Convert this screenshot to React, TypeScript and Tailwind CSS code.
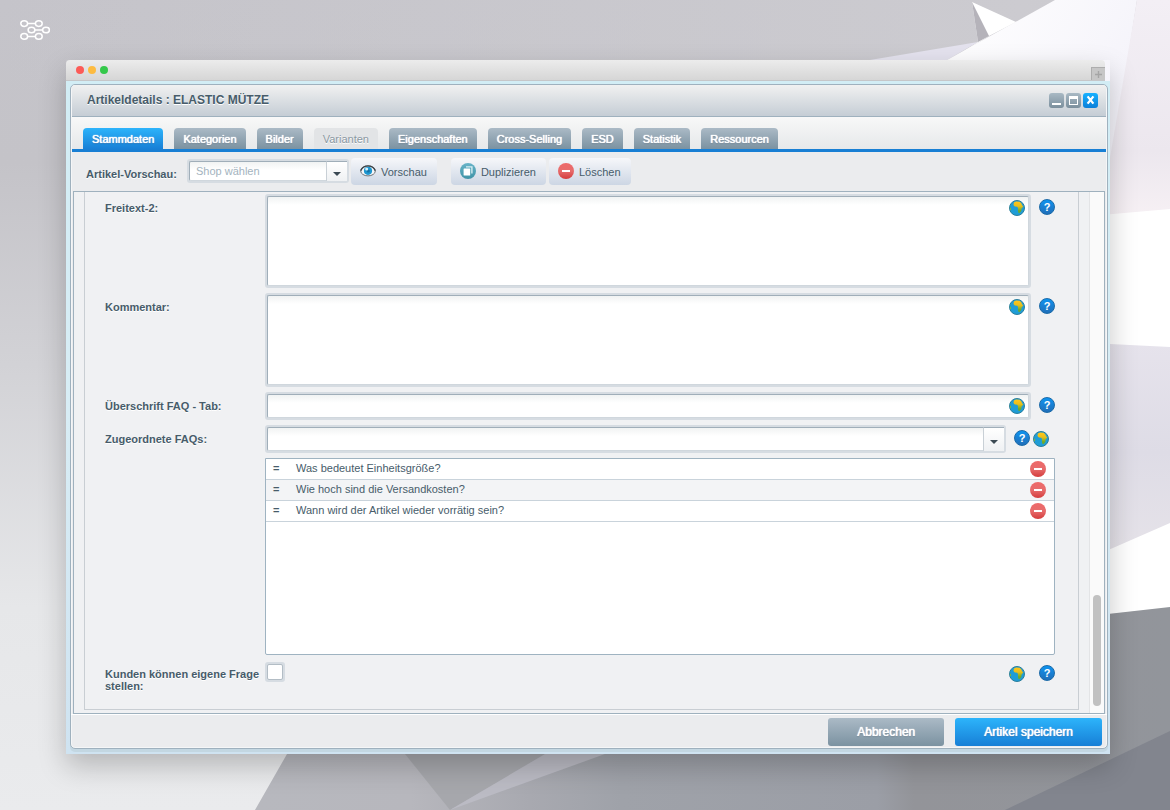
import { useId, useState, type ReactNode } from "react";

const TEXT = "text-[11px] leading-[12px] text-[#475c6a]";

function Backdrop() {
  return (
    <svg
      aria-hidden="true"
      viewBox="0 0 1170 810"
      preserveAspectRatio="none"
      className="absolute inset-0 h-full w-full"
    >
      <defs>
        <linearGradient id="bgBase" x1="0" y1="0" x2="0" y2="1">
          <stop offset="0" stopColor="#c5c4ca" />
          <stop offset="0.2" stopColor="#c4c3c8" />
          <stop offset="0.45" stopColor="#d2d2d6" />
          <stop offset="0.75" stopColor="#e6e7e9" />
          <stop offset="1" stopColor="#eaebed" />
        </linearGradient>
        <linearGradient id="bgTop" x1="0" y1="0" x2="1" y2="0">
          <stop offset="0" stopColor="#cdccd1" stopOpacity="0" />
          <stop offset="1" stopColor="#cdccd1" />
        </linearGradient>
        <linearGradient id="bgSheet" x1="0" y1="0" x2="1" y2="1">
          <stop offset="0" stopColor="#ffffff" />
          <stop offset="1" stopColor="#eeecf7" />
        </linearGradient>
        <linearGradient id="bgPink" x1="0" y1="0" x2="0" y2="1">
          <stop offset="0" stopColor="#f3eff5" />
          <stop offset="0.7" stopColor="#ece7ee" />
          <stop offset="1" stopColor="#f6f0f4" />
        </linearGradient>
        <linearGradient id="bgLavender" x1="0" y1="0" x2="0" y2="1">
          <stop offset="0" stopColor="#e6e3ec" />
          <stop offset="0.5" stopColor="#dedce6" />
          <stop offset="1" stopColor="#e6e3e9" />
        </linearGradient>
        <linearGradient id="bgFloor" x1="255" y1="0" x2="1170" y2="0" gradientUnits="userSpaceOnUse">
          <stop offset="0" stopColor="#b7b8be" />
          <stop offset="0.17" stopColor="#b7b7bd" />
          <stop offset="0.3" stopColor="#a8a9b0" />
          <stop offset="0.4" stopColor="#9fa2a9" />
          <stop offset="0.68" stopColor="#9b9ea6" />
          <stop offset="0.72" stopColor="#939499" />
          <stop offset="1" stopColor="#92959b" />
        </linearGradient>
      </defs>
      <rect width="1170" height="810" fill="url(#bgBase)" />
      <rect width="1170" height="90" fill="url(#bgTop)" />
      <path d="M870 60 978 42 947 60Z" fill="#e4e2ee" />
      <path d="M947 60 1055 0H1137L1090 300H947Z" fill="url(#bgSheet)" />
      <path d="M972 2 1016 22 989 36 947 62 978 42Z" fill="#ffffff" />
      <path d="M972 2 989 36 978 42Z" fill="#b5b3ba" />
      <path d="M1137 0H1170V212L1100 216Z" fill="url(#bgPink)" />
      <path d="M1090 216 1170 209V350H1090Z" fill="#ffffff" />
      <path d="M1090 343 1170 347V525L1090 560Z" fill="url(#bgLavender)" />
      <path d="M1090 558 1170 523V608L1090 616Z" fill="#ffffff" />
      <path d="M1090 616 1170 607V810H255L287 754 400 700H1090Z" fill="url(#bgFloor)" />
      <path d="M405 754H545L450 810Z" fill="#a6a7ac" />
      <path d="M450 810 545 754H605Z" fill="#bbbbc4" />
      <path d="M1005 810 1170 731V810Z" fill="#82858e" />
    </svg>
  );
}

function Logo() {
  const nodes = [
    [4.2, 3.6],
    [18.8, 3.6],
    [11.5, 10],
    [26, 10],
    [4.2, 16.4],
    [18.8, 16.4],
  ];
  return (
    <svg width="30" height="20" viewBox="0 0 30 20" fill="none" stroke="#fff" strokeWidth="1.5" role="img" aria-label="Logo">
      {nodes.map(([cx, cy]) => (
        <ellipse key={`${cx}-${cy}`} cx={cx} cy={cy} rx="3.4" ry="2.8" />
      ))}
      <path d="M7.6 3.6h7.8M14.9 10h7.7M7.6 16.4h7.8" />
    </svg>
  );
}

function GlobeIcon() {
  const id = useId();
  return (
    <svg width="16" height="16" viewBox="0 0 16 16" className="block" aria-hidden="true">
      <defs>
        <linearGradient id={id} x1="0" y1="0" x2="0" y2="1">
          <stop offset="0.1" stopColor="#fcc419" />
          <stop offset="0.4" stopColor="#e9bf1c" />
          <stop offset="0.8" stopColor="#6cab2a" />
        </linearGradient>
      </defs>
      <circle cx="8" cy="8" r="7.5" fill="#1f9dd6" stroke="#2a7f9d" strokeWidth="1" />
      <path
        d="M4.900 2.500 7 1.400l3.700.3 1.700 1.900.9 2.100h1.100l-.9 1.900-1 1.200-.2 2.100-1.900 2.300-1-.5-.5-2.300.2-2.200-.9-1.400-2.400-.3-1.300-1.400Z"
        fill={`url(#${id})`}
      />
      <path d="M.8 7.200 2 8.500 1.900 9.800 1.100 10.500Z" fill="#8fb82a" />
    </svg>
  );
}

function GlobeButton() {
  return (
    <button type="button" aria-label="Übersetzen" className="block size-4 shrink-0">
      <GlobeIcon />
    </button>
  );
}

function HelpButton() {
  return (
    <button
      type="button"
      aria-label="Hilfe"
      className="block size-4 shrink-0 rounded-full border border-[#1a6aa8] bg-linear-to-b from-[#0a93f0] to-[#1f6fb9] text-center text-[11px] leading-[14px] font-bold text-white"
    >
      ?
    </button>
  );
}

function RemoveIcon() {
  const id = useId();
  return (
    <svg width="16" height="16" viewBox="0 0 16 16" className="block" aria-hidden="true">
      <defs>
        <linearGradient id={id} x1="0" y1="0" x2="0" y2="1">
          <stop offset="0" stopColor="#ee6a6a" />
          <stop offset="0.5" stopColor="#e76c6c" />
          <stop offset="1" stopColor="#d43c3c" />
        </linearGradient>
      </defs>
      <circle cx="8" cy="8" r="8" fill={`url(#${id})`} />
      <rect x="4" y="7" width="8" height="2" fill="#fff" />
    </svg>
  );
}

function CopyIcon() {
  return (
    <svg width="16" height="16" viewBox="0 0 16 16" className="block" aria-hidden="true">
      <defs>
        <linearGradient id="copyFill" x1="0" y1="0" x2="0" y2="1">
          <stop offset="0" stopColor="#67b3c8" />
          <stop offset="1" stopColor="#3f93a6" />
        </linearGradient>
      </defs>
      <circle cx="8" cy="8" r="8" fill="url(#copyFill)" />
      <path d="M6 3.200h6.600v7.400h-1.400V4.600H6Z" fill="#d9eef3" />
      <rect x="3.600" y="5.400" width="6.600" height="7.200" rx="0.500" fill="#fff" />
    </svg>
  );
}

function EyeIcon() {
  return (
    <svg width="16" height="16" viewBox="0 0 16 16" className="block" aria-hidden="true">
      <ellipse cx="8" cy="8" rx="7.300" ry="4.900" fill="#f6f7f9" stroke="#6c7378" strokeWidth="1" />
      <path d="M.7 7.600C2.400 4 5 2.900 8 2.900s5.600 1.100 7.300 4.700" fill="none" stroke="#3b4247" strokeWidth="1.300" />
      <circle cx="8" cy="7.800" r="4.100" fill="#1e96cf" />
      <circle cx="8.300" cy="8" r="1.600" fill="#1573a8" />
      <circle cx="6.700" cy="6" r="1.500" fill="#d8f0fb" />
    </svg>
  );
}

function Arrow() {
  return (
    <span className="pointer-events-none absolute inset-y-0 right-0 flex w-[21px] items-center justify-center border-t border-l border-t-[#a0aeb9] border-l-[#c9d0d6] bg-linear-to-b from-white to-[#eff1f3]">
      <svg width="8" height="4" viewBox="0 0 8 4" className="mt-1" aria-hidden="true">
        <path d="M0 0h8L4 4Z" fill="#3c4a54" />
      </svg>
    </span>
  );
}

const RING = "rounded-[3px] bg-[#d6dce2] p-[2px]";
const INNER =
  "block w-full rounded-[2px] border border-t-[#a0aeb9] border-r-[#d0d7dd] border-b-[#d0d7dd] border-l-[#a0aeb9] bg-white bg-linear-to-b from-[#f1f3f3] via-white via-[8px] to-white outline-none";

function Row({ id, label, children }: { id: string; label: string; children: ReactNode }) {
  return (
    <div className="flex items-start">
      <label htmlFor={id} className={`${TEXT} w-40 shrink-0 pt-2 font-bold [text-shadow:0_1px_0_#fff]`}>
        {label}
      </label>
      {children}
    </div>
  );
}

function AreaRow({ id, label }: { id: string; label: string }) {
  return (
    <Row id={id} label={label}>
      <div className={`${RING} relative flex-1`}>
        <textarea id={id} className={`${INNER} h-[90px] resize-none py-1 pr-7 pl-1 ${TEXT}`} />
        <div className="absolute top-[6px] right-[6px]">
          <GlobeButton />
        </div>
      </div>
      <div className="pt-[5px] pl-2">
        <HelpButton />
      </div>
    </Row>
  );
}

const TABS = [
  "Stammdaten",
  "Kategorien",
  "Bilder",
  "Varianten",
  "Eigenschaften",
  "Cross-Selling",
  "ESD",
  "Statistik",
  "Ressourcen",
];

function Tabs() {
  const [active, setActive] = useState("Stammdaten");
  return (
    <div
      role="tablist"
      className="mx-px flex h-[35px] items-end gap-[11px] border-b-[3px] border-[#187fd4] bg-linear-to-b from-[#f8f8f8] to-[#e6e8ea] pl-[11px]"
    >
      {TABS.map((tab) => {
        const disabled = tab === "Varianten";
        const look = disabled
          ? "bg-[#e2e4e6] text-[#8a98a2] [text-shadow:0_1px_0_#fff]"
          : tab === active
            ? "bg-linear-to-b from-[#2db4fb] to-[#187fd6] text-white [text-shadow:0_0_1px_#fff,0_0_1px_#fff,0_1px_1px_#1460a8]"
            : "bg-linear-to-b from-[#abbac6] to-[#7b92a1] text-white [text-shadow:0_0_1px_#fff,0_0_1px_#fff,0_1px_1px_#5c7282]";
        return (
          <button
            key={tab}
            type="button"
            role="tab"
            aria-selected={tab === active}
            disabled={disabled}
            onClick={() => setActive(tab)}
            className={`h-[21px] rounded-t-[4px] px-[9px] text-[11px] leading-[12px] whitespace-nowrap ${look}`}
          >
            {tab}
          </button>
        );
      })}
    </div>
  );
}

function ToolButton({ icon, children }: { icon: ReactNode; children: ReactNode }) {
  return (
    <button
      type="button"
      className={`${TEXT} flex h-[27px] items-center gap-[5px] rounded-[4px] bg-linear-to-b from-[#f6f7fa] to-[#cdd6e4] pr-[10px] pl-[9px]`}
    >
      <span className="-mt-[2px]">{icon}</span>
      {children}
    </button>
  );
}

function Toolbar() {
  return (
    <div className="flex h-[39px] items-start pt-[6px] pl-[15px]">
      <label htmlFor="shop" className={`${TEXT} w-[101px] shrink-0 pt-[10px] font-bold [text-shadow:0_1px_0_#fff]`}>
        Artikel-Vorschau:
      </label>
      <div className={`${RING} mt-px w-[162px]`}>
        <div className="relative">
          <select
            id="shop"
            defaultValue=""
            className={`${INNER} h-5 appearance-none pr-6 pl-[6px] text-[11px] leading-[12px] text-[#a3b3be]`}
          >
            <option value="">Shop wählen</option>
          </select>
          <Arrow />
        </div>
      </div>
      <div className="flex pl-[2px]">
        <ToolButton icon={<EyeIcon />}>Vorschau</ToolButton>
      </div>
      <div className="flex gap-[3px] pl-[14px]">
        <ToolButton icon={<CopyIcon />}>Duplizieren</ToolButton>
        <ToolButton icon={<RemoveIcon />}>Löschen</ToolButton>
      </div>
    </div>
  );
}

function TitleBar() {
  const box = "flex size-[15px] items-center justify-center rounded-[3px]";
  return (
    <div className="mx-px flex h-8 items-start justify-between rounded-t-[3px] border-b border-[#9fb1be] bg-linear-to-b from-[#f1f1f1] to-[#c5cdd5] pr-2 pl-[15px]">
      <h1 className="pt-2 text-[12px] leading-[14px] font-bold text-[#475c6a] [text-shadow:0_1px_0_#fff]">
        Artikeldetails : ELASTIC MÜTZE
      </h1>
      <div className="flex gap-[2px] pt-2">
        <button type="button" aria-label="Minimieren" className={`${box} bg-linear-to-b from-[#a9b9c4] to-[#7b8f9d]`}>
          <svg width="15" height="15" viewBox="0 0 15 15">
            <path d="M3 10h9v2H3Z" fill="#fff" />
          </svg>
        </button>
        <button type="button" aria-label="Maximieren" className={`${box} bg-linear-to-b from-[#a9b9c4] to-[#7b8f9d]`}>
          <svg width="15" height="15" viewBox="0 0 15 15">
            <path d="M3 3h9v9H3ZM4 6v5h7V6Z" fill="#fff" fillRule="evenodd" />
          </svg>
        </button>
        <button type="button" aria-label="Schließen" className={`${box} bg-linear-to-b from-[#17b1ff] to-[#0c7fd9]`}>
          <svg width="15" height="15" viewBox="0 0 15 15">
            <path d="M4.600 3.400 10.400 10.600M10.400 3.400 4.600 10.600" stroke="#fff" strokeWidth="2.300" />
          </svg>
        </button>
      </div>
    </div>
  );
}

const INITIAL_FAQS = [
  "Was bedeutet Einheitsgröße?",
  "Wie hoch sind die Versandkosten?",
  "Wann wird der Artikel wieder vorrätig sein?",
];

function FaqTable() {
  const [faqs, setFaqs] = useState(INITIAL_FAQS);
  const cell = "h-[21px] border-b border-[#c9d3db] p-0";
  return (
    <div className="ml-40 h-[197px] rounded-b-[2px] border border-[#9fb3c1] bg-white">
      <table className="w-full border-separate border-spacing-0">
        <tbody>
          {faqs.map((faq) => (
            <tr key={faq} className="even:bg-[#f3f4f6]">
              <td className={`${cell} w-[30px]`}>
                <div className={`${TEXT} pb-[2px] pl-[7px] font-bold`}>=</div>
              </td>
              <td className={cell}>
                <div className={`${TEXT} pb-[2px]`}>{faq}</div>
              </td>
              <td className={`${cell} w-6`}>
                <button
                  type="button"
                  aria-label={`${faq} entfernen`}
                  className="block"
                  onClick={() => setFaqs(faqs.filter((f) => f !== faq))}
                >
                  <RemoveIcon />
                </button>
              </td>
            </tr>
          ))}
        </tbody>
      </table>
    </div>
  );
}

function ArticleForm() {
  return (
    <div className="mx-[10px] mb-[3px] flex flex-1 flex-col gap-[5px] border border-t-0 border-[#c9ced3] pt-[2px] pr-[23px] pb-[17px] pl-5">
      <AreaRow id="freitext2" label="Freitext-2:" />
      <AreaRow id="kommentar" label="Kommentar:" />
      <Row id="faqtitel" label="Überschrift FAQ - Tab:">
        <div className={`${RING} relative flex-1`}>
          <input id="faqtitel" type="text" className={`${INNER} h-6 pr-7 pl-1 ${TEXT}`} />
          <div className="absolute top-[6px] right-[6px]">
            <GlobeButton />
          </div>
        </div>
        <div className="pt-[5px] pl-2">
          <HelpButton />
        </div>
      </Row>
      <Row id="faqs" label="Zugeordnete FAQs:">
        <div className={`${RING} flex-1`}>
          <div className="relative">
            <select id="faqs" className={`${INNER} h-6 appearance-none pr-6 pl-1 ${TEXT}`}>
              <option value=""></option>
            </select>
            <Arrow />
          </div>
        </div>
        <div className="pt-[5px] pl-2">
          <HelpButton />
        </div>
        <div className="pt-[6px] pr-[6px] pl-[3px]">
          <GlobeButton />
        </div>
      </Row>
      <FaqTable />
      <Row id="eigene" label="Kunden können eigene Frage stellen:">
        <div className="flex-1">
          <div className={`${RING} mt-[2px] size-5`}>
            <input
              id="eigene"
              type="checkbox"
              className="block size-4 appearance-none rounded-[2px] border border-[#b3bdc5] bg-white checked:bg-[#187fd4]"
            />
          </div>
        </div>
        <div className="pt-[6px]">
          <GlobeButton />
        </div>
        <div className="pt-[5px] pl-[14px]">
          <HelpButton />
        </div>
      </Row>
    </div>
  );
}

export default function App() {
  const action = "h-7 rounded-[3px] px-[29px] text-[12px] leading-[14px] text-white";
  return (
    <div className="relative min-h-screen font-['Liberation_Sans',Arial,sans-serif]">
      <Backdrop />
      <div className="relative pb-14">
        <header className="h-[60px] pt-5 pl-5">
          <Logo />
        </header>
        <main className="mr-[60px] ml-[66px] shadow-[0_12px_26px_rgba(0,0,0,0.22)]">
          <div className="mr-[5px] flex h-[21px] items-end justify-between rounded-t-[4px] border-b border-[#c6c6c8] bg-linear-to-b from-[#ececec] to-[#d6d6d6]">
            <div className="flex gap-1 pb-[6px] pl-[10px]">
              <span className="size-2 rounded-full bg-[#fc5b57]" />
              <span className="size-2 rounded-full bg-[#fdbb40]" />
              <span className="size-2 rounded-full bg-[#34c84a]" />
            </div>
            <button
              type="button"
              aria-label="Neuer Tab"
              className="flex h-[13px] w-[14px] items-center justify-center border-t border-l border-[#adadad] bg-[#c6c6c6]"
            >
              <svg width="7" height="7" viewBox="0 0 7 7">
                <path d="M3.500 0v7M0 3.500h7" stroke="#a5a5a5" strokeWidth="1.400" />
              </svg>
            </button>
          </div>
          <div className="bg-linear-to-b from-[#d2edf5] via-[#d8edf5] to-[#cfe3f1] pt-[3px] pr-[2px] pb-[5px] pl-1">
            <div className="rounded-[5px] border border-[#9fb1be] bg-[#ebecee] shadow-[0_3px_0_#c3d7e2,inset_0_0_0_1px_#f5f6f7]">
              <TitleBar />
              <Tabs />
              <Toolbar />
              <section className="mx-[2px] flex border border-[#9fb1be] bg-[#f0f1f3]">
                <ArticleForm />
                <div className="flex w-[15px] flex-col justify-end border-l border-[#e3e4e6] bg-[#fafafa] pb-[7px] pl-[3px]">
                  <div className="h-[111px] w-2 rounded-full bg-[#c1c1c1]" />
                </div>
              </section>
              <footer className="flex justify-end gap-[11px] border-t border-white pt-[3px] pr-[5px] pb-[2px]">
                <button
                  type="button"
                  className={`${action} bg-linear-to-b from-[#abbac6] to-[#7b92a1] [text-shadow:0_0_1px_#fff,0_0_1px_#fff,0_1px_1px_#5c7282]`}
                >
                  Abbrechen
                </button>
                <button
                  type="button"
                  className={`${action} bg-linear-to-b from-[#2db4fb] to-[#187fd6] [text-shadow:0_0_1px_#fff,0_0_1px_#fff,0_1px_1px_#1460a8]`}
                >
                  Artikel speichern
                </button>
              </footer>
            </div>
          </div>
        </main>
      </div>
    </div>
  );
}
